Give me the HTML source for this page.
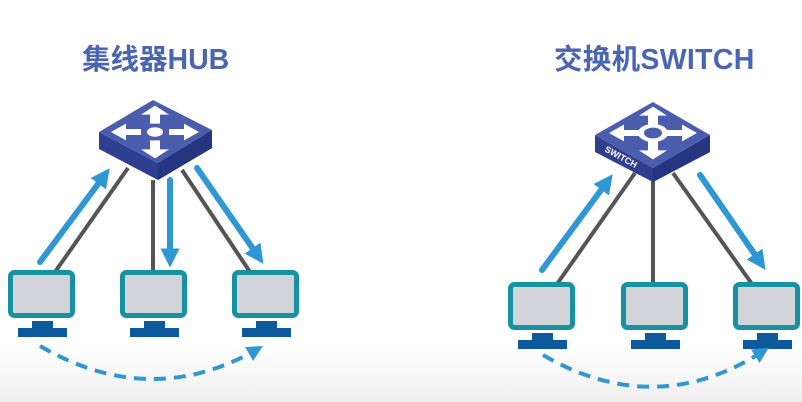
<!DOCTYPE html>
<html><head><meta charset="utf-8"><style>
html,body{margin:0;padding:0;width:802px;height:402px;overflow:hidden;background:linear-gradient(#fff 0,#fff 345px,#f7f7f7 375px,#efefef 402px);}
.t{position:absolute;font-family:"Liberation Sans","Noto Sans CJK SC",sans-serif;font-weight:bold;font-size:28.5px;color:#4a66b2;line-height:1;}
</style></head><body>
<div class="t" style="left:82px;top:46px;">集线器HUB</div>
<div class="t" style="left:554px;top:46px;letter-spacing:0.3px;">交换机SWITCH</div>
<svg width="802" height="402" style="position:absolute;left:0;top:0">
<defs>
<g id="mon">
<rect x="2.5" y="2.5" width="62" height="43" rx="4" fill="#d3d4d9" stroke="#1792a0" stroke-width="5"/>
<rect x="24" y="51" width="21" height="8" fill="#0c5a9c"/>
<rect x="10" y="58" width="49" height="9" fill="#0c5a9c"/>
</g>
<g id="arr"><polygon points="0,-44 -14,-29 -5,-29 -5,-14 5,-14 5,-29 14,-29" fill="#fff"/></g>
<marker id="ah" viewBox="0 0 10 10" refX="5" refY="5" markerWidth="3.2" markerHeight="3.2" orient="auto"><polygon points="0,0 10,5 0,10" fill="#2f97d4"/></marker>
<marker id="ah2" viewBox="0 0 10 10" refX="5" refY="5" markerWidth="4" markerHeight="4" orient="auto"><polygon points="0,0 10,5 0,10" fill="#2f97d4"/></marker>
</defs>
<!-- HUB -->
<g stroke="#555" stroke-width="4">
<line x1="55" y1="272" x2="128" y2="168"/><line x1="153" y1="180" x2="153" y2="272"/><line x1="182" y1="170" x2="250" y2="272"/>
</g>
<polygon points="99,132 99,149 158,180 212,148 212,130 158,163" fill="#2f3f8f"/>
<polygon points="158,163 158,180 212,148 212,130" fill="#25357f"/>
<polygon points="99,132 153,100 212,130 158,163" fill="#4b5eae"/>
<g transform="translate(155,132) scale(1,0.6)"><use href="#arr"/><use href="#arr" transform="rotate(90)"/><use href="#arr" transform="rotate(180)"/><use href="#arr" transform="rotate(270)"/><circle r="8" fill="#fff"/></g>
<g stroke="#2f97d4" stroke-width="6" stroke-linecap="round" fill="none">
<line x1="40" y1="262" x2="104" y2="176" marker-end="url(#ah)"/>
<line x1="170" y1="180" x2="170" y2="258" marker-end="url(#ah)"/>
<line x1="197" y1="168" x2="258" y2="256" marker-end="url(#ah)"/>
</g>
<use href="#mon" x="8" y="270"/><use href="#mon" x="120" y="270"/><use href="#mon" x="232" y="270"/>
<path d="M40,346 Q150,410 256,350" stroke="#2f97d4" stroke-width="4" fill="none" stroke-dasharray="12,8" marker-end="url(#ah2)"/>
<!-- SWITCH -->
<g stroke="#555" stroke-width="4">
<line x1="557" y1="284" x2="635" y2="173"/><line x1="653" y1="180" x2="653" y2="284"/><line x1="673" y1="173" x2="752" y2="284"/>
</g>
<polygon points="595,135 595,152 653,182 710,152 710,135 653,168" fill="#2f3f8f"/>
<polygon points="653,168 653,182 710,152 710,135" fill="#25357f"/>
<polygon points="595,135 653,102 710,135 653,168" fill="#4b5eae"/>
<text x="0" y="0" transform="translate(604,151) rotate(29)" font-family="Liberation Sans,sans-serif" font-weight="bold" font-size="9" fill="#fff">SWITCH</text>
<g transform="translate(653,133) scale(1,0.6)"><use href="#arr"/><use href="#arr" transform="rotate(90)"/><use href="#arr" transform="rotate(180)"/><use href="#arr" transform="rotate(270)"/><circle r="15" fill="#fff"/><circle r="9" fill="#4b5eae"/></g>
<g stroke="#2f97d4" stroke-width="6" stroke-linecap="round" fill="none">
<line x1="542" y1="270" x2="607" y2="182" marker-end="url(#ah)"/>
<line x1="700" y1="175" x2="760" y2="262" marker-end="url(#ah)"/>
</g>
<use href="#mon" x="508" y="282"/><use href="#mon" x="621" y="282"/><use href="#mon" x="733" y="282"/>
<path d="M543,355 Q655,420 762,352" stroke="#2f97d4" stroke-width="4" fill="none" stroke-dasharray="12,8" marker-end="url(#ah2)"/>
</svg>
</body></html>
